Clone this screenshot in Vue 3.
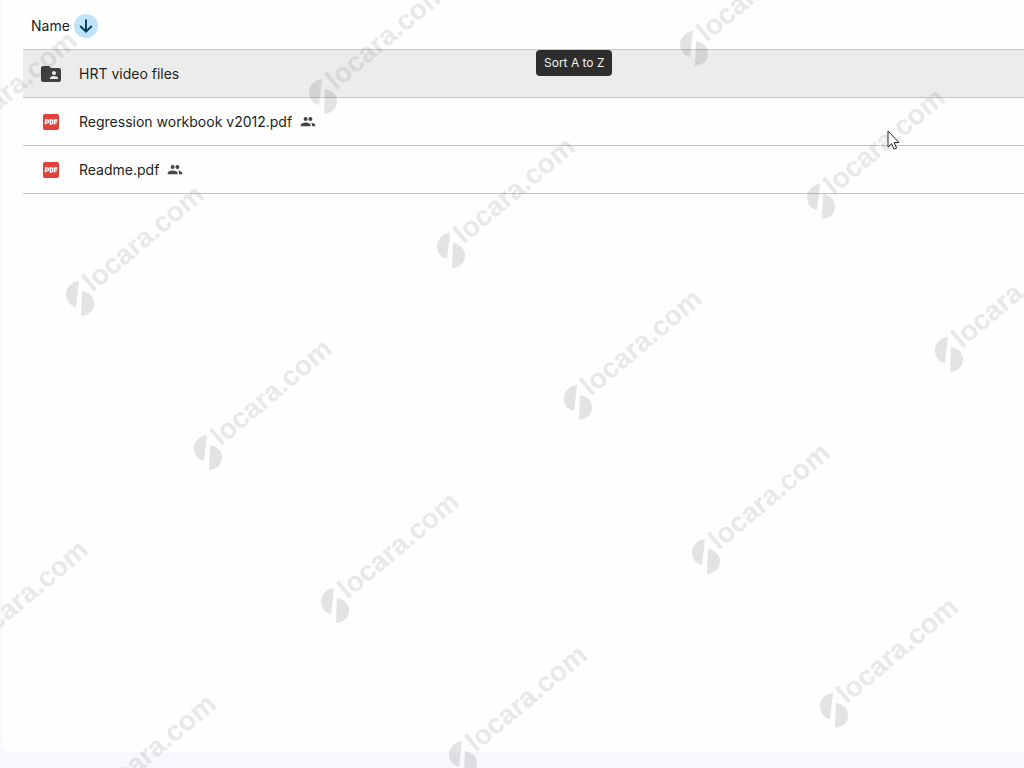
<script setup>
const files = [
  { name: 'HRT video files', kind: 'folder', shared: false, active: true },
  { name: 'Regression workbook v2012.pdf', kind: 'pdf', shared: true, active: false },
  { name: 'Readme.pdf', kind: 'pdf', shared: true, active: false },
]

const marks = [
  [-47, 144], [323, 96], [694, 48],
  [80, 298], [451, 250], [821, 201],
  [208, 452], [578, 402], [949, 354],
  [-36, 653], [335, 605], [706, 556],
  [92, 807], [463, 758], [834, 710],
]
</script>

<template>
  <div class="page">
    <main class="panel">
      <table class="files">
        <thead>
          <tr>
            <th scope="col">
              <div class="heading">
                <span>Name</span>
                <button type="button" class="sort" aria-label="Sort A to Z">
                  <svg viewBox="0 0 24 24" width="24" height="24" aria-hidden="true">
                    <path d="M12 5.500V17.500M6.200 12L12 17.700L17.800 12" fill="none" stroke="#063b5e" stroke-width="1.9" />
                  </svg>
                </button>
              </div>
            </th>
          </tr>
        </thead>
        <tbody>
          <tr v-for="file in files" :key="file.name" :class="{ active: file.active }">
            <td>
              <div class="entry">
                <svg v-if="file.kind === 'folder'" class="kind" viewBox="0 0 24 24" aria-hidden="true">
                  <path fill="#3f4041" d="M20 6h-8l-2-2H4c-1.1 0-2 .9-2 2v12c0 1.1.9 2 2 2h16c1.1 0 2-.9 2-2V8c0-1.1-.9-2-2-2zm-5 3c1.1 0 2 .9 2 2s-.9 2-2 2-2-.9-2-2 .9-2 2-2zm4 8h-8v-1c0-1.330 2.670-2 4-2s4 .67 4 2v1z" />
                </svg>
                <svg v-else class="kind" viewBox="0 0 24 24" aria-hidden="true">
                  <rect x="4" y="4" width="16" height="16" rx="2" fill="#e2403a" />
                  <g fill="none" stroke="#fff" stroke-width="1.5">
                    <path d="M6.6 14.600V9.9H8.6Q9.7 9.9 9.700 11.100Q9.700 12.500 8.600 12.500H6.600" />
                    <path d="M11.3 9.900V13.900H12.300Q13.800 13.900 13.800 11.900Q13.800 9.900 12.300 9.900Z" />
                    <path d="M15.600 14.600V9.900H18.400M15.600 12.200H18" />
                  </g>
                </svg>
                <span>{{ file.name }}</span>
                <svg v-if="file.shared" class="people" viewBox="0 0 16 16" role="img" aria-label="Shared">
                  <g fill="#444746">
                    <circle cx="5.6" cy="4.900" r="2" />
                    <circle cx="10.400" cy="4.900" r="2" />
                    <path d="M.7 12.300V11.200C.7 9.500 3.600 8.600 5.600 8.600S10.600 9.500 10.600 11.200V12.300Z" />
                    <path d="M11 8.700C13 8.900 15.300 9.700 15.300 11.200V12.300H12V11.200Q12 9.700 11 8.700Z" />
                  </g>
                </svg>
              </div>
            </td>
          </tr>
        </tbody>
      </table>
    </main>

    <div class="tooltip" role="tooltip">Sort A to Z</div>

    <svg class="watermark" aria-hidden="true">
      <g v-for="([x, y], i) in marks" :key="i" :transform="`translate(${x} ${y})`">
        <path d="M-1 -17C-9 -16 -14 -10 -14 -4C-14 4 -9 8 -4 9Z" />
        <path d="M2 -7C9 -6 14 -1 14 5C14 13 9 17 1 18Z" />
        <text transform="rotate(-40)" x="13" y="4">locara.com</text>
      </g>
    </svg>

    <svg class="pointer" viewBox="0 0 14 21" aria-hidden="true">
      <path d="M1 1V17L4.600 13.600L7 19.200L9.600 18.100L7.200 12.600H12Z" fill="#fff" stroke="#222" />
    </svg>
  </div>
</template>

<style>
body {
  margin: 0;
  background: #f6f8fd;
}
</style>

<style scoped>
.page {
  position: relative;
  box-sizing: border-box;
  min-height: 100vh;
  padding-bottom: 16px;
  overflow: hidden;
  font-family: Inter, "Liberation Sans", sans-serif;
  font-size: 14px;
  line-height: 20px;
  color: #1f1f1f;
}

.panel {
  box-sizing: border-box;
  min-height: calc(100vh - 16px);
  padding-left: 21px;
  background: #fefefe;
  border-left: 2px solid #fafafc;
  border-bottom-left-radius: 14px;
}

.files {
  width: 100%;
  border-collapse: separate;
  border-spacing: 0;
}

th,
td {
  padding: 0;
  border-bottom: 1px solid #c4c4c4;
  font-weight: 400;
  text-align: left;
}

.heading {
  display: flex;
  align-items: center;
  gap: 4px;
  height: 49px;
  padding: 2px 8px 0;
  box-sizing: border-box;
}

.sort {
  width: 24px;
  height: 24px;
  padding: 0;
  border: 0;
  border-radius: 50%;
  background: #bfe3fb;
}

.sort svg {
  display: block;
}

.entry {
  display: flex;
  align-items: center;
  height: 47px;
  padding-left: 16px;
}

.active {
  background: #ececec;
}

.kind {
  width: 24px;
  height: 24px;
  margin-right: 16px;
}

.people {
  width: 16px;
  height: 16px;
  margin-left: 8px;
}

.tooltip {
  position: absolute;
  top: 50px;
  left: 536px;
  padding: 3px 8px;
  border-radius: 4px;
  background: #2d2d2d;
  color: #f2f2f2;
  font-size: 12px;
}

.watermark {
  position: absolute;
  inset: 0;
  width: 100%;
  height: 100%;
  fill: #000;
  opacity: 0.1;
  pointer-events: none;
}

.watermark text {
  font: bold 28px "Liberation Sans", sans-serif;
  opacity: 0.8;
}

.pointer {
  position: absolute;
  top: 130px;
  left: 887px;
  width: 14px;
  height: 21px;
}
</style>
